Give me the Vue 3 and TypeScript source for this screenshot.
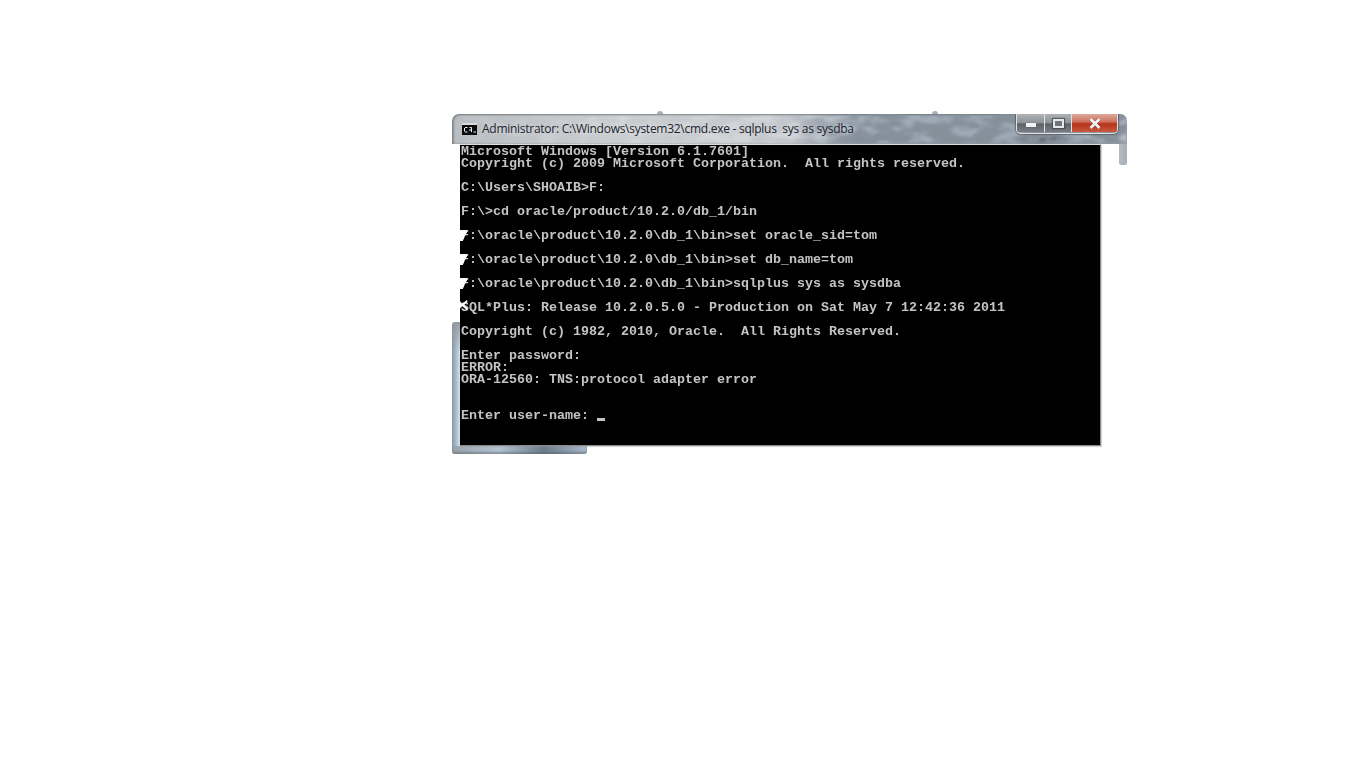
<script setup lang="ts">
const lines: string[] = [
  'Microsoft Windows [Version 6.1.7601]',
  'Copyright (c) 2009 Microsoft Corporation.  All rights reserved.',
  '',
  'C:\\Users\\SHOAIB>F:',
  '',
  'F:\\>cd oracle/product/10.2.0/db_1/bin',
  '',
  'F:\\oracle\\product\\10.2.0\\db_1\\bin>set oracle_sid=tom',
  '',
  'F:\\oracle\\product\\10.2.0\\db_1\\bin>set db_name=tom',
  '',
  'F:\\oracle\\product\\10.2.0\\db_1\\bin>sqlplus sys as sysdba',
  '',
  'SQL*Plus: Release 10.2.0.5.0 - Production on Sat May 7 12:42:36 2011',
  '',
  'Copyright (c) 1982, 2010, Oracle.  All Rights Reserved.',
  '',
  'Enter password:',
  'ERROR:',
  'ORA-12560: TNS:protocol adapter error',
  '',
  '',
  'Enter user-name: ',
]
const title = 'Administrator: C:\\Windows\\system32\\cmd.exe - sqlplus  sys as sysdba'
const notches: number[] = [85, 109, 133]
</script>

<template>
  <main class="page">
    <section class="window">
      <span class="nub nub-left"></span>
      <span class="nub nub-right"></span>
      <header class="titlebar">
        <svg class="texture" width="675" height="30" viewBox="0 0 675 30" aria-hidden="true">
          <defs>
            <filter id="mottle" x="0" y="0" width="100%" height="100%">
              <feTurbulence type="fractalNoise" baseFrequency="0.04 0.1" numOctaves="3" seed="3" />
              <feColorMatrix type="matrix" values="0 0 0 0 0.24  0 0 0 0 0.28  0 0 0 0 0.33  5 0 0 0 -1.7" />
              <feGaussianBlur stdDeviation="1.2" />
            </filter>
            <linearGradient id="fade" x1="0" x2="1" y1="0" y2="0">
              <stop offset="0.15" stop-color="#fff" stop-opacity="0.1" />
              <stop offset="0.5" stop-color="#fff" stop-opacity="0.2" />
              <stop offset="0.6" stop-color="#fff" stop-opacity="1" />
              <stop offset="1" stop-color="#fff" stop-opacity="1" />
            </linearGradient>
            <mask id="fadeMask"><rect width="675" height="30" fill="url(#fade)" /></mask>
          </defs>
          <g mask="url(#fadeMask)"><rect width="675" height="30" filter="url(#mottle)" /></g>
        </svg>
        <svg class="cmd-icon" width="16" height="13" viewBox="0 0 16 13">
          <rect x="0" y="0" width="15" height="12" fill="#0c0c0c" />
          <rect x="0" y="0" width="15" height="2" fill="#d8dadc" />
          <path d="M3 4.5H5.5M2.5 5V8.5M3 9H5.5M7.5 4.5H9.5V9M7 7H9.5M11.5 9H14" stroke="#f0f0f0" stroke-width="1" fill="none" />
        </svg>
        <span class="title">{{ title }}</span>
        <div class="controls">
          <span class="btn min"><i></i></span>
          <span class="btn max"><i></i></span>
          <span class="btn close">
            <svg width="14" height="11" viewBox="0 0 14 11">
              <path d="M2.5 1L11.5 10M11.5 1L2.5 10" stroke="#3b3b3b" stroke-width="4" stroke-opacity="0.35" fill="none" />
              <path d="M2.5 1L11.5 10M11.5 1L2.5 10" stroke="#f4f4f4" stroke-width="2.6" fill="none" />
            </svg>
          </span>
        </div>
      </header>
      <div class="body">
        <div class="left-edge">
          <div class="edge-gap"></div>
          <div class="edge-bottom"></div>
        </div>
        <div class="terminal">
          <div class="text">
            <div v-for="(l, i) in lines" :key="i" class="line">{{ l }}<span v-if="i === lines.length - 1" class="cursor"></span></div>
          </div>
          <span v-for="n in notches" :key="n" class="notch" :style="{ top: n + 'px' }"></span>
          <span class="notch notch-s"></span>
        </div>
        <div class="right-side"><div class="right-edge"></div></div>
      </div>
      <div class="bottom-edge"></div>
    </section>
  </main>
</template>

<style scoped>
.page {
  width: 1366px;
  height: 768px;
  box-sizing: border-box;
  padding: 114px 0 0 452px;
  background: #ffffff;
  overflow: hidden;
}
.window {
  position: relative;
  width: 675px;
  display: flex;
  flex-direction: column;
}
.nub {
  position: absolute;
  top: -3px;
  width: 6px;
  height: 3px;
  background: #a9b0b5;
  border-radius: 3px 3px 0 0;
  filter: blur(0.6px);
}
.nub-left { left: 205px; }
.nub-right { left: 480px; }
.titlebar {
  position: relative;
  height: 30px;
  box-sizing: border-box;
  display: flex;
  align-items: flex-start;
  padding-left: 10px;
  border-radius: 7px 7px 0 0;
  overflow: hidden;
  background:
    radial-gradient(ellipse 34px 7px at 590px 25px, rgba(70, 76, 84, 0.85) 0%, rgba(70, 76, 84, 0) 100%),
    linear-gradient(90deg, #bdc2c6 0%, #d4d6d8 25%, #d2d5d8 50%, #a4afbb 60%, #9aa7b4 92%, #b4bcc3 100%);
  box-shadow: inset 0 1px 2px rgba(80, 85, 90, 0.6), inset 2px 0 2px rgba(80, 85, 90, 0.45);
}
.texture {
  position: absolute;
  left: 0;
  top: 0;
}
.cmd-icon {
  position: relative;
  margin-top: 9px;
  flex: none;
}
.title {
  position: relative;
  margin: 6px 0 0 4px;
  font: 12px/18px "Open Sans", "Noto Sans", sans-serif;
  color: #1c2430;
  white-space: pre;
  letter-spacing: -0.27px;
  text-shadow: 0 0 5px rgba(255, 255, 255, 0.55);
}
.controls {
  position: relative;
  margin-left: auto;
  margin-right: 9px;
  display: flex;
  height: 19px;
  border: 1px solid #dfe2e5;
  border-top: 0;
  border-radius: 0 0 5px 5px;
  box-shadow: 0 0 1px 1px rgba(60, 64, 70, 0.55);
  overflow: hidden;
  flex: none;
}
.btn {
  display: flex;
  align-items: center;
  justify-content: center;
  box-sizing: border-box;
  height: 18px;
  background: linear-gradient(180deg, #aeb2b6 0%, #8f9498 48%, #5e636a 55%, #787d83 100%);
}
.min { width: 28px; border-right: 1px solid #dfe2e5; }
.min i {
  display: block;
  width: 10px;
  height: 4px;
  margin-top: 3px;
  background: #f0f1f2;
  box-shadow: 0 0 1px rgba(40, 44, 50, 0.7);
}
.max { width: 27px; border-right: 1px solid #dfe2e5; }
.max i {
  display: block;
  width: 11px;
  height: 9px;
  box-sizing: border-box;
  border: 2px solid #e6e8ea;
  box-shadow: 0 0 1px 1px rgba(60, 64, 70, 0.7);
  background: #70757c;
}
.close {
  width: 45px;
  background: linear-gradient(180deg, #dca99c 0%, #cd7360 42%, #b5341c 55%, #c9583f 100%);
}
.body {
  display: flex;
  height: 302px;
}
.left-edge {
  width: 8px;
  display: flex;
  flex-direction: column;
  flex: none;
}
.edge-gap {
  height: 178px;
  background: #ffffff;
}
.edge-bottom {
  flex: 1;
  background:
    linear-gradient(180deg, rgba(146, 150, 156, 0.9) 0%, rgba(146, 150, 156, 0) 25%, rgba(146, 150, 156, 0) 100%),
    linear-gradient(90deg, #8f979e 0%, #a9bfd4 55%, #d5e2ef 100%);
  border-radius: 3px 0 0 0;
}
.terminal {
  position: relative;
  width: 641px;
  box-sizing: border-box;
  background: #000000;
  flex: none;
  overflow: hidden;
  border-top: 1px solid #d8dde1;
  border-right: 1px solid #8a8a8a;
  border-bottom: 1px solid #8a8a8a;
  box-shadow: 1px 1px 1px rgba(150, 150, 150, 0.4);
}
.text {
  padding: 1px 0 0 1px;
  font: bold 13.33px/12px "Liberation Mono", "DejaVu Sans Mono", monospace;
  color: #c4c4c4;
  filter: blur(0.3px);
}
.line {
  height: 12px;
  white-space: pre;
}
.cursor {
  display: inline-block;
  width: 8px;
  height: 3px;
  background: #c4c4c4;
  vertical-align: -2px;
}
.notch {
  position: absolute;
  left: 0;
  width: 8px;
  height: 11px;
  background: #ffffff;
  clip-path: polygon(0 0, 100% 5%, 62% 55%, 35% 100%, 0 100%);
  filter: blur(0.4px);
}
.notch-s {
  top: 153px;
  height: 13px;
  clip-path: polygon(0 25%, 30% 45%, 85% 15%, 95% 28%, 55% 52%, 95% 80%, 82% 92%, 30% 62%, 0 80%);
}
.right-side {
  flex: 1;
  display: flex;
  justify-content: flex-end;
  align-items: flex-start;
}
.right-edge {
  width: 8px;
  height: 21px;
  background: linear-gradient(90deg, #b4bcc2 0%, #a6aeb5 100%);
  border-radius: 0 0 2px 2px;
}
.bottom-edge {
  width: 135px;
  height: 8px;
  border-radius: 0 0 3px 3px;
  background: linear-gradient(90deg, #9aa3ab 0%, #b4c4d4 35%, #6d7c8c 68%, #a8bacb 100%);
  box-shadow: inset 0 -2px 2px rgba(90, 95, 100, 0.5);
}
</style>

<style>
html, body { background: #ffffff; }
</style>
